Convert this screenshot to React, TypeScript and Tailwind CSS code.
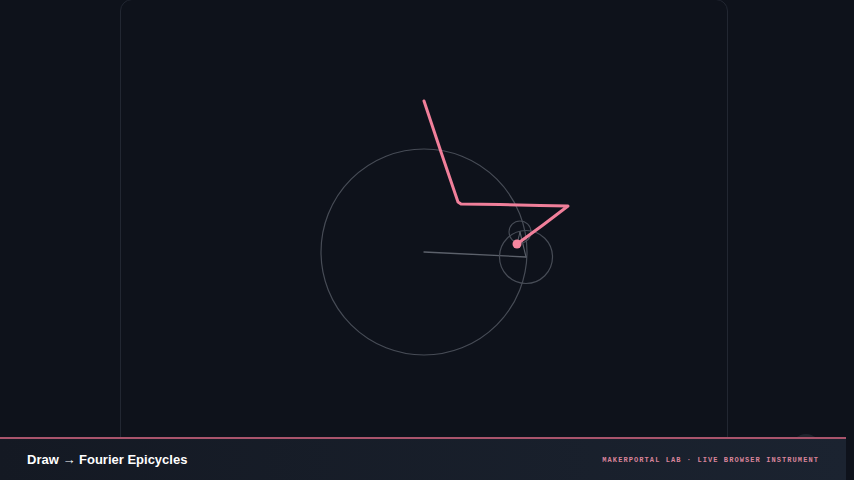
import React from 'react';

// pen trail recorded from the drawing (page coords)
const trail: [number, number][] = [
  [424, 101], [441, 152], [458, 202], [461, 204], [500, 204.5], [540, 205.5], [568, 206], [543, 225], [517, 244],
];

const EpicycleCanvas = () => {
  const d = trail.map((p, i) => `${i === 0 ? 'M' : 'L'}${p[0]} ${p[1]}`).join(' ');
  return (
    <svg width={606} height={518} viewBox="121 0 606 518" className="block">
      <g fill="none" strokeLinecap="round">
        <circle cx={424} cy={252} r={103} stroke="#474c56" strokeWidth={1.2} />
        <line x1={424} y1={252} x2={526} y2={257} stroke="#5c616b" strokeWidth={1.3} />
        <circle cx={526} cy={257} r={26.5} stroke="#474c56" strokeWidth={1.2} />
        <line x1={526} y1={257} x2={520} y2={232} stroke="#5c616b" strokeWidth={1.1} />
        <circle cx={520} cy={232} r={11} stroke="#474c56" strokeWidth={1.1} />
        <line x1={520} y1={232} x2={517} y2={244} stroke="#5c616b" strokeWidth={1} />
        <path d={d} stroke="#f07f9a" strokeWidth={3} strokeLinejoin="round" />
      </g>
      <circle cx={517} cy={244} r={4.5} fill="#f6869f" />
    </svg>
  );
};

export default function App() {
  return (
    <div className="relative h-[480px] w-[854px] overflow-hidden bg-[#0e121b]">
      <div className="w-[846px] pl-[120px]">
        <div className="-mt-px h-[520px] w-[608px] overflow-hidden rounded-xl border border-[#222732] bg-[#0e121b]">
          <EpicycleCanvas />
        </div>
      </div>

      {/* floating button peeking behind the footer */}
      <div className="absolute left-[792px] top-[434px] h-[28px] w-[28px] rounded-full bg-[#2a2f39] opacity-60" />

      <footer className="absolute bottom-0 left-0 flex h-[43px] w-[846px] items-center justify-between border-t-2 border-[#a9546c] bg-gradient-to-r from-[#141923] to-[#1b2330] pl-[27px] pr-[27px]">
        <span className="text-[13px] font-bold text-white [font-family:'Liberation_Sans',Arial,sans-serif]">
          Draw <span className="font-bold [font-family:'Noto_Sans',sans-serif]">→</span> Fourier Epicycles
        </span>
        <span className="pt-[2px] text-[7px] font-bold uppercase tracking-[0.155em] text-[#d9849a] [font-family:'Liberation_Mono','Courier_New',monospace]">
          MakerPortal Lab · Live Browser Instrument
        </span>
      </footer>
    </div>
  );
}
